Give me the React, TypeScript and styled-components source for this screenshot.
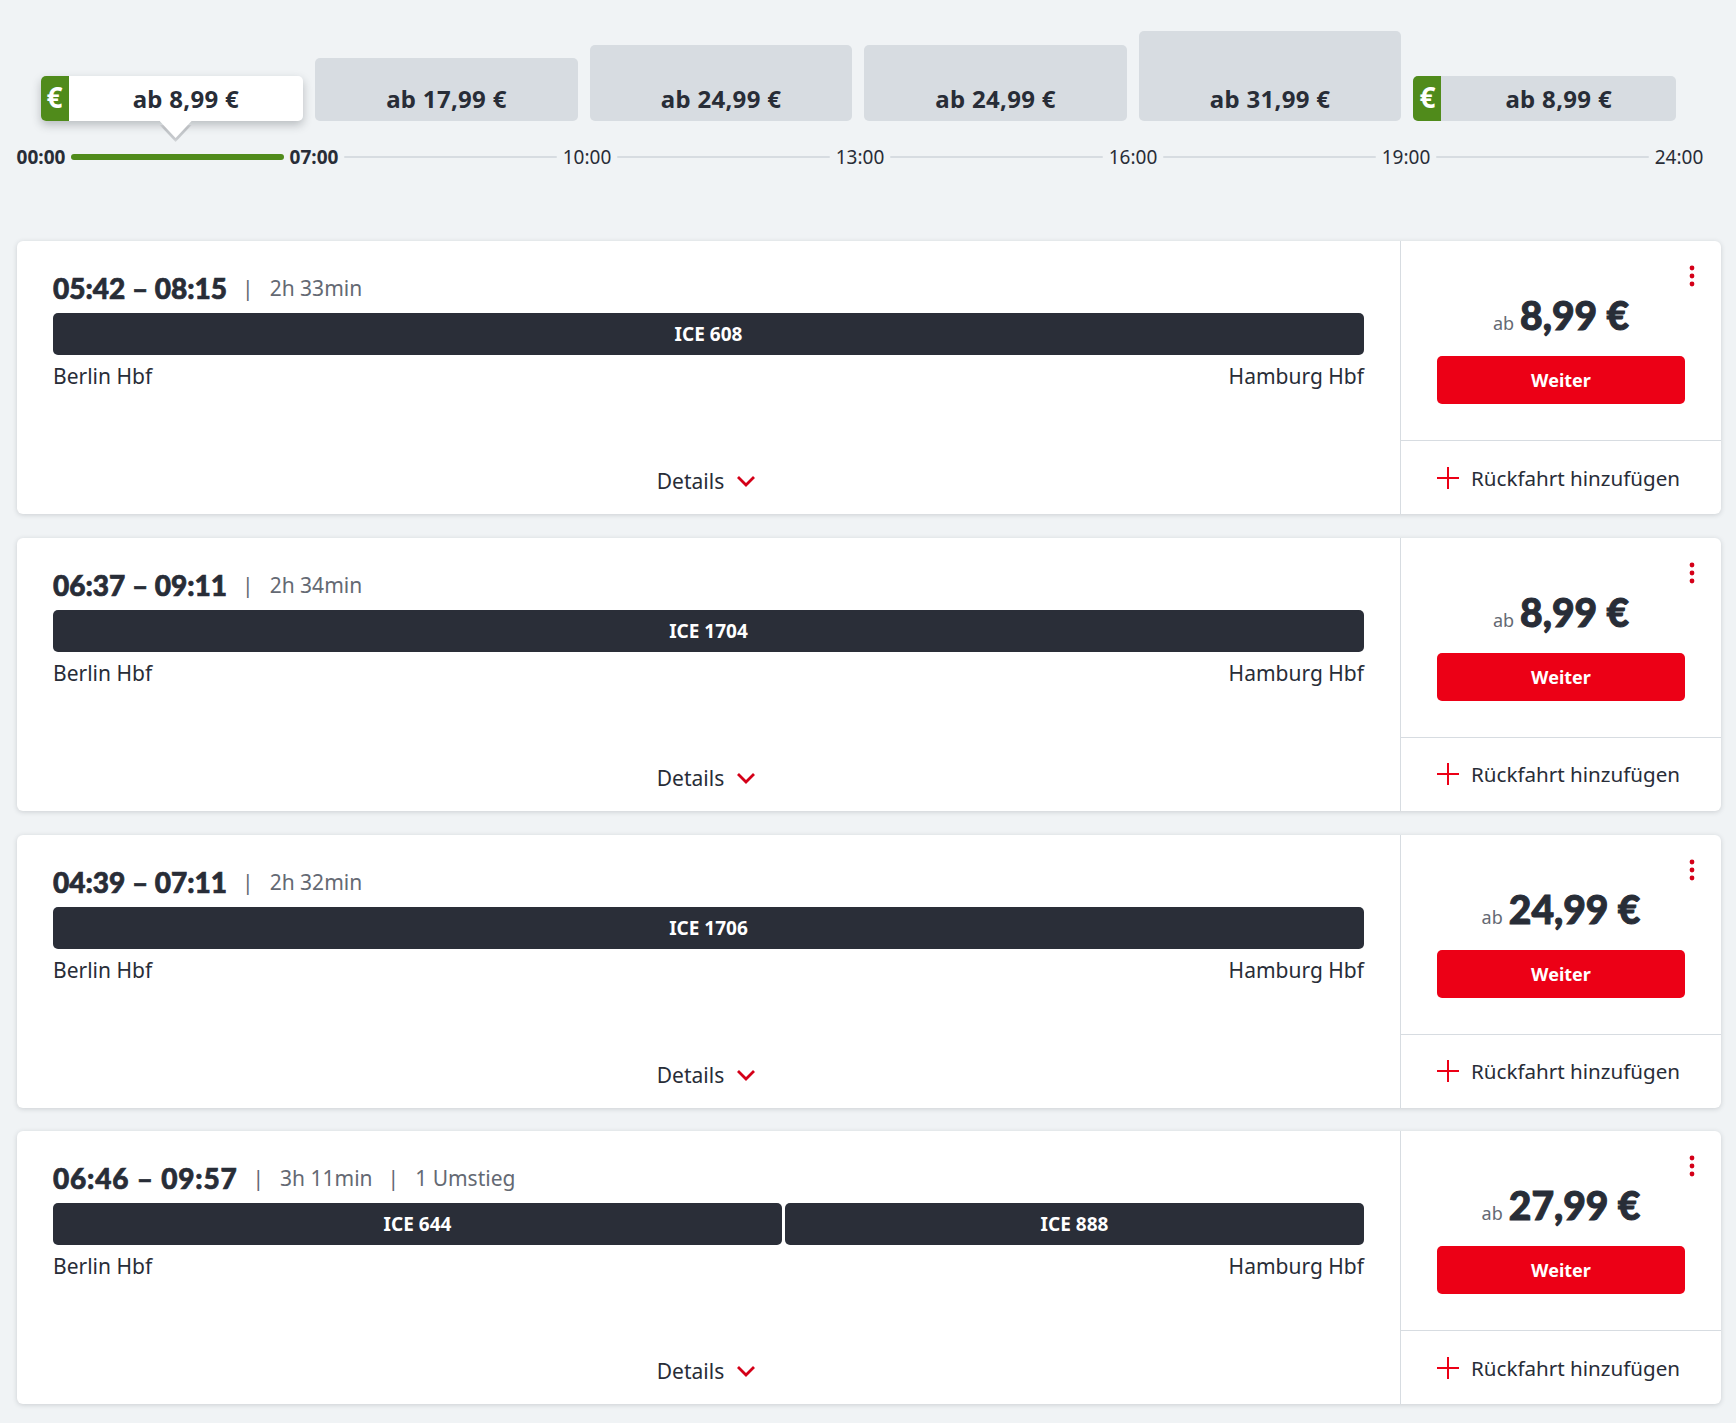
import { Fragment } from "react";
import styled, { createGlobalStyle } from "styled-components";

const INK = "#282d37";
const GREY = "#646973";
const RED = "#ec0016";
const DARK_RED = "#d40018";
const GREEN = "#508b1b";
const LINE = "#d7dce1";

const GlobalStyle = createGlobalStyle`
  html, body {
    margin: 0;
    background: #f0f3f5;
    color: ${INK};
    font-family: "Noto Sans", "Liberation Sans", sans-serif;
  }
  * { box-sizing: border-box; }
`;

const Page = styled.div`
  width: 1736px;
  height: 1423px;
  padding: 31px 15px 0 17px;
`;

const ChipRow = styled.div`
  display: flex;
  align-items: flex-end;
  gap: 12px;
  height: 90px;
  padding: 0 45px 0 23.6px;
`;

const Chip = styled.div<{ $height: number; $active?: boolean }>`
  position: relative;
  flex: 1;
  display: flex;
  height: ${(p) => p.$height}px;
  border-radius: 5px;
  background: ${(p) => (p.$active ? "#fff" : LINE)};
  box-shadow: ${(p) => (p.$active ? "0 4px 10px rgba(40,45,55,0.28)" : "none")};
`;

const ChipBadge = styled.span`
  width: 28px;
  flex: none;
  display: flex;
  align-items: center;
  justify-content: center;
  border-radius: 5px 0 0 5px;
  background: ${GREEN};
  color: #fff;
  font-size: 28px;
  font-weight: 700;
  line-height: 1;
  padding-bottom: 3px;
`;

const ChipLabel = styled.span`
  flex: 1;
  align-self: flex-end;
  height: 45px;
  line-height: 45px;
  text-align: center;
  font-size: 24px;
  font-weight: 700;
  letter-spacing: 0.3px;
  color: ${INK};
`;

const Pointer = styled.span`
  position: absolute;
  left: 119px;
  top: 100%;
  width: 32px;
  height: 17px;
  background: #fff;
  clip-path: polygon(0 0, 100% 0, 50% 100%);
`;

const PointerShadow = styled.span`
  position: absolute;
  left: 119px;
  top: calc(100% + 4px);
  width: 32px;
  height: 17px;
  background: rgba(40, 45, 55, 0.22);
  filter: blur(2px);
  clip-path: polygon(0 0, 100% 0, 50% 100%);
`;

const Timeline = styled.div`
  display: flex;
  align-items: center;
  gap: 6px;
  height: 26px;
  margin-top: 23px;
  width: 1686px;
`;

const TimeLabel = styled.span<{ $bold?: boolean }>`
  width: 48px;
  flex: none;
  display: flex;
  justify-content: center;
  font-size: 19px;
  font-weight: ${(p) => (p.$bold ? 700 : 400)};
  white-space: nowrap;
`;

const TimeLine = styled.span<{ $active?: boolean }>`
  flex: 1;
  height: ${(p) => (p.$active ? 6 : 2)}px;
  border-radius: 3px;
  background: ${(p) => (p.$active ? GREEN : LINE)};
`;

const CardList = styled.div`
  display: flex;
  flex-direction: column;
  gap: 23.8px;
  margin-top: 71px;
  width: 1704px;
`;

const Card = styled.article`
  display: flex;
  height: 273px;
  border-radius: 6px;
  background: #fff;
  box-shadow: 0 1px 5px rgba(40, 45, 55, 0.18);
`;

const TripInfo = styled.div`
  flex: 1;
  min-width: 0;
  display: flex;
  flex-direction: column;
  padding: 28px 36px 0;
`;

const TripHead = styled.div`
  display: flex;
  align-items: center;
  height: 38px;
  margin-bottom: 6px;
`;

const Times = styled.span<{ $wide?: boolean }>`
  font-family: Lato, "Noto Sans", sans-serif;
  font-size: 28px;
  font-weight: 900;
  letter-spacing: ${(p) => (p.$wide ? "0.8px" : "0")};
  -webkit-text-stroke: 0.7px ${INK};
`;

const Meta = styled.span`
  font-size: 21px;
  color: ${GREY};
  &::before {
    content: "|";
    margin: 0 16px 0 15px;
  }
`;

const Segments = styled.div`
  display: flex;
  gap: 3px;
`;

const Segment = styled.div<{ $grow: number }>`
  flex: ${(p) => p.$grow};
  height: 42px;
  border-radius: 5px;
  background: #2a2e38;
  color: #fff;
  font-size: 19px;
  font-weight: 700;
  line-height: 42px;
  text-align: center;
`;

const Stations = styled.div`
  display: flex;
  justify-content: space-between;
  margin-top: 7px;
  font-size: 21px;
  line-height: 28px;
`;

const DetailsToggle = styled.div`
  display: flex;
  align-items: center;
  justify-content: center;
  gap: 12px;
  margin-top: auto;
  margin-bottom: 18px;
  padding-right: 4px;
  height: 30px;
  font-size: 21px;
`;

const PriceColumn = styled.div`
  width: 321px;
  flex: none;
  display: flex;
  flex-direction: column;
  border-left: 1px solid ${LINE};
`;

const PriceBox = styled.div`
  position: relative;
  height: 200px;
  display: flex;
  flex-direction: column;
  justify-content: flex-end;
  padding: 0 36px 36px;
  border-bottom: 1px solid ${LINE};
`;

const MenuDots = styled.svg`
  position: absolute;
  top: 24px;
  right: 26px;
`;

const Price = styled.div`
  display: flex;
  align-items: baseline;
  justify-content: center;
  gap: 6px;
  margin-bottom: 15px;
`;

const PriceFrom = styled.span`
  font-size: 18px;
  color: ${GREY};
`;

const PriceValue = styled.span`
  font-family: Lato, "Noto Sans", sans-serif;
  font-size: 39px;
  font-weight: 900;
  line-height: 52px;
  -webkit-text-stroke: 1px ${INK};
`;

const ContinueButton = styled.button`
  height: 48px;
  border: none;
  border-radius: 5px;
  background: ${RED};
  color: #fff;
  font-family: inherit;
  font-size: 18px;
  font-weight: 700;
`;

const ReturnTrip = styled.div`
  flex: 1;
  display: flex;
  align-items: center;
  gap: 12px;
  padding-left: 36px;
  font-size: 20.6px;
`;

const chips = [
  { price: "ab 8,99 €", height: 45, cheapest: true, active: true },
  { price: "ab 17,99 €", height: 63 },
  { price: "ab 24,99 €", height: 76 },
  { price: "ab 24,99 €", height: 76 },
  { price: "ab 31,99 €", height: 90 },
  { price: "ab 8,99 €", height: 45, cheapest: true },
];

const times = ["07:00", "10:00", "13:00", "16:00", "19:00", "24:00"];

const trips = [
  { times: "05:42 – 08:15", meta: ["2h 33min"], price: "8,99 €", segments: [{ name: "ICE 608", grow: 1 }] },
  { times: "06:37 – 09:11", meta: ["2h 34min"], price: "8,99 €", segments: [{ name: "ICE 1704", grow: 1 }] },
  { times: "04:39 – 07:11", meta: ["2h 32min"], price: "24,99 €", segments: [{ name: "ICE 1706", grow: 1 }] },
  {
    times: "06:46 – 09:57",
    wide: true,
    meta: ["3h 11min", "1 Umstieg"],
    price: "27,99 €",
    segments: [
      { name: "ICE 644", grow: 729 },
      { name: "ICE 888", grow: 579 },
    ],
  },
];

function Chevron() {
  return (
    <svg width="20" height="12" viewBox="0 0 20 12" fill="none">
      <path d="M2 2l8 8 8-8" stroke={DARK_RED} strokeWidth="2.8" />
    </svg>
  );
}

function Plus() {
  return (
    <svg width="22" height="22" viewBox="0 0 22 22" fill="none">
      <path d="M11 0v22M0 11h22" stroke={RED} strokeWidth="2" />
    </svg>
  );
}

function Dots() {
  return (
    <MenuDots width="6" height="22" viewBox="0 0 6 22" fill={DARK_RED}>
      <circle cx="3" cy="3" r="2.4" />
      <circle cx="3" cy="11" r="2.4" />
      <circle cx="3" cy="19" r="2.4" />
    </MenuDots>
  );
}

export default function App() {
  return (
    <Page>
      <GlobalStyle />
      <ChipRow>
        {chips.map((chip, i) => (
          <Chip key={i} $height={chip.height} $active={chip.active}>
            {chip.cheapest && <ChipBadge>€</ChipBadge>}
            <ChipLabel>{chip.price}</ChipLabel>
            {chip.active && (
              <>
                <PointerShadow />
                <Pointer />
              </>
            )}
          </Chip>
        ))}
      </ChipRow>

      <Timeline>
        <TimeLabel $bold>00:00</TimeLabel>
        {times.map((time, i) => (
          <Fragment key={time}>
            <TimeLine $active={i === 0} />
            <TimeLabel $bold={i === 0}>{time}</TimeLabel>
          </Fragment>
        ))}
      </Timeline>

      <CardList>
        {trips.map((trip) => (
          <Card key={trip.times}>
            <TripInfo>
              <TripHead>
                <Times $wide={trip.wide}>{trip.times}</Times>
                {trip.meta.map((m) => (
                  <Meta key={m}>{m}</Meta>
                ))}
              </TripHead>
              <Segments>
                {trip.segments.map((s) => (
                  <Segment key={s.name} $grow={s.grow}>
                    {s.name}
                  </Segment>
                ))}
              </Segments>
              <Stations>
                <span>Berlin Hbf</span>
                <span>Hamburg Hbf</span>
              </Stations>
              <DetailsToggle>
                Details
                <Chevron />
              </DetailsToggle>
            </TripInfo>
            <PriceColumn>
              <PriceBox>
                <Dots />
                <Price>
                  <PriceFrom>ab</PriceFrom>
                  <PriceValue>{trip.price}</PriceValue>
                </Price>
                <ContinueButton>Weiter</ContinueButton>
              </PriceBox>
              <ReturnTrip>
                <Plus />
                Rückfahrt hinzufügen
              </ReturnTrip>
            </PriceColumn>
          </Card>
        ))}
      </CardList>
    </Page>
  );
}
